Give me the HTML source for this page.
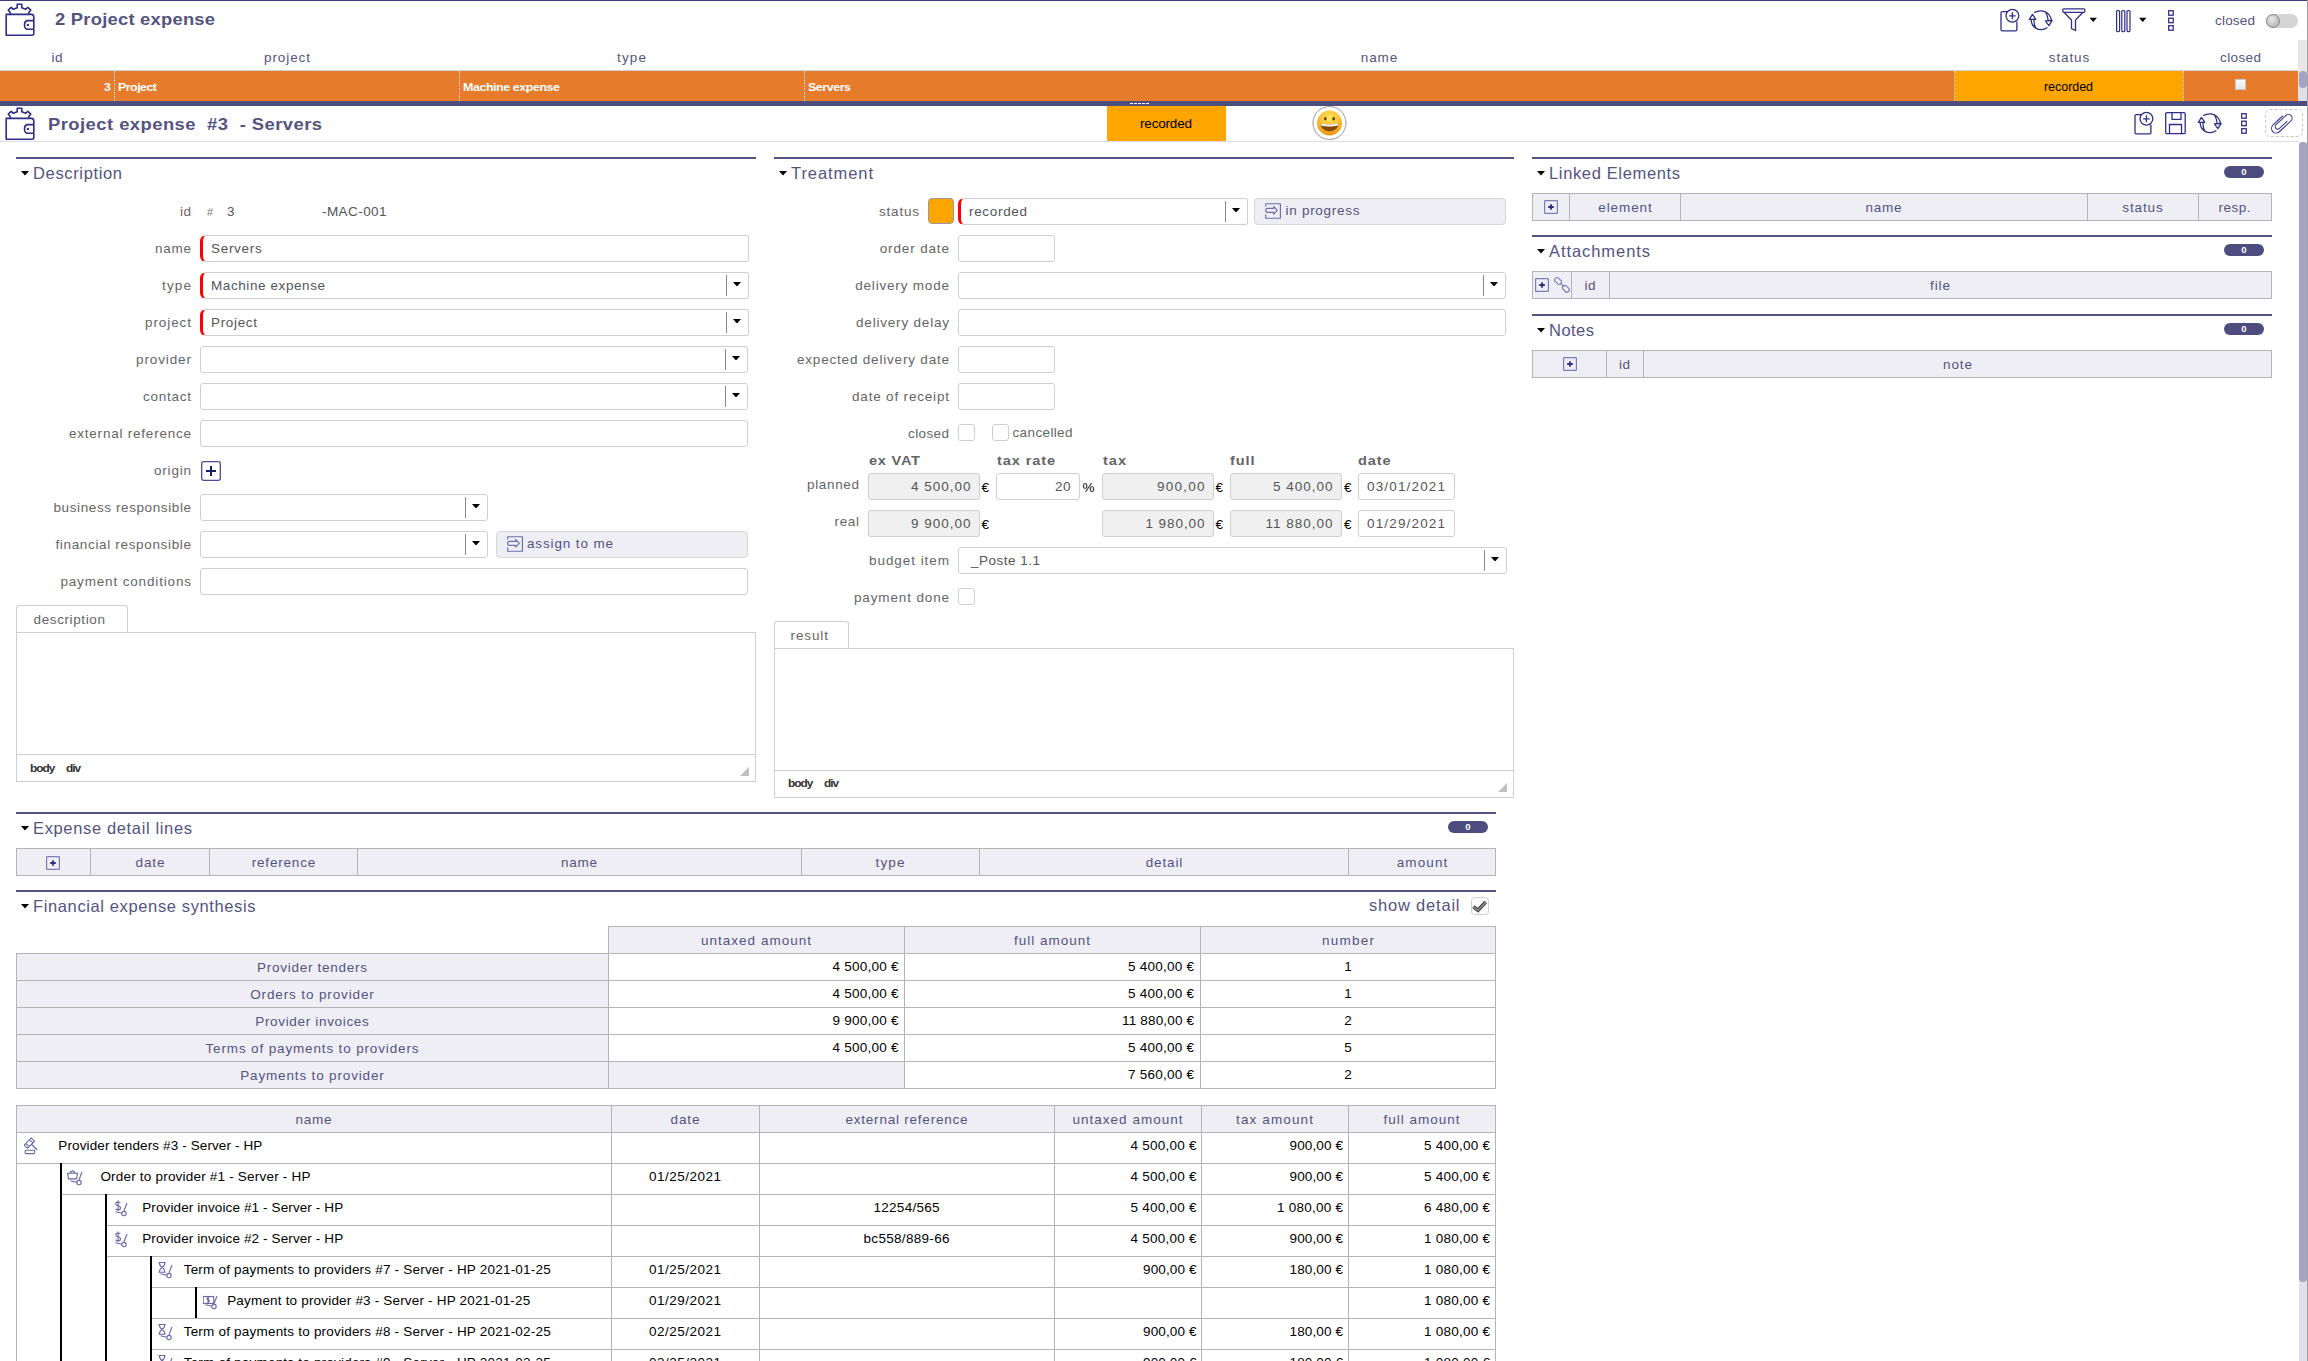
<!DOCTYPE html>
<html><head><meta charset="utf-8"><title>Project expense</title>
<style>
html,body{margin:0;padding:0;background:#fff;width:2308px;height:1361px;overflow:hidden;}
body{position:relative;font-family:"Liberation Sans",sans-serif;}
.t{position:absolute;white-space:nowrap;line-height:1;}
.r{position:absolute;box-sizing:border-box;}
</style></head><body>
<div class="r" style="left:0px;top:0px;width:2307px;height:1px;background:#3e3e72;"></div>
<div class="r" style="left:2307px;top:0px;width:1px;height:1361px;background:#a0a0a0;"></div>
<svg class="r" style="left:5px;top:3px;" width="32" height="34" viewBox="0 0 32 34"><g fill="none" stroke="#2e2e87" stroke-width="1.6" stroke-linejoin="round">
<path d="M1.2 11.4 H26.5 Q28.8 11.4 28.8 14 V30.5 Q28.8 32.2 27 32.2 H1.2 Z"/>
<path d="M28.8 17.6 H23 Q19.5 17.6 19.5 21.9 Q19.5 26.2 23 26.2 H28.8"/>
<path d="M5.2 11.2 V9.6 L3.2 7.1 L6.2 4.4 L8.4 6.3 L12.2 4.8 V1.2 H16.8 V4.8 L20.6 6.3 L22.8 4.4 L25.8 7.1 L23.8 9.6 V11.2"/>
</g><circle cx="22.9" cy="21.9" r="1.2" fill="#2e2e87"/></svg>
<div class="t" style="left:55.00px;top:10.61px;font-size:17px;letter-spacing:0.224px;color:#545381;transform:scaleX(1.0800);transform-origin:0 0;font-weight:bold;">2 Project expense</div>
<svg class="r" style="left:1995px;top:5px;" width="30" height="30" viewBox="0 0 30 30"><g fill="none" stroke="#2e2e87" stroke-width="1.3">
<path d="M12.4 6.6 H7.4 Q6 6.6 6 8 V24.4 Q6 25.8 7.4 25.8 H20.5 Q21.9 25.8 21.9 24.4 V16.6"/>
<circle cx="17.4" cy="10.8" r="6.4"/>
<path d="M17.4 7.3 V14.3 M14.1 10.8 H20.7"/></g></svg>
<svg class="r" style="left:2025px;top:5px;" width="32" height="30" viewBox="0 0 32 30"><g fill="none" stroke="#2e2e87" stroke-width="1.25" stroke-linejoin="round">
<path d="M9.2 7.6 Q15 4.6 20.8 7.1"/>
<path d="M20.6 7 Q25.6 9.6 26.4 15.6 L23.2 15.6 Q22.6 10.5 20.6 7 Z"/>
<path d="M20.4 15.8 L27.2 15.4 L23.9 20.6 Z"/>
<path d="M4.3 14.4 L7.5 9.4 L10.8 14.4 Z"/>
<path d="M6.1 14.4 Q6.3 20.5 10.8 23.2 Q8.9 19.8 8.9 14.4"/>
<path d="M10.6 23.1 Q16.5 26.6 22.4 22.6"/></g></svg>
<svg class="r" style="left:2062px;top:8px;" width="37" height="24" viewBox="0 0 37 24"><g fill="none" stroke="#2e2e87" stroke-width="1.3">
<rect x="0.8" y="0.8" width="22" height="3.5" rx="1"/>
<path d="M2 4.3 L9.5 12 V20.5 L13.5 22.5 V12 L21 4.3"/></g>
<path d="M27.5 9.8 H35 L31.25 14 Z" fill="#000"/></svg>
<svg class="r" style="left:2116px;top:10px;" width="32" height="23" viewBox="0 0 32 23"><g fill="none" stroke="#2e2e87" stroke-width="1.2">
<rect x="0.6" y="0.6" width="3" height="21" rx="1"/><rect x="5.8" y="0.6" width="3" height="21" rx="1"/><rect x="11" y="0.6" width="3" height="21" rx="1"/></g>
<path d="M23 7.8 H30.5 L26.75 12 Z" fill="#000"/></svg>
<svg class="r" style="left:2168px;top:10px;" width="7" height="22" viewBox="0 0 7 22"><g fill="none" stroke="#2e2e87" stroke-width="1.3">
<rect x="0.7" y="0.7" width="4.5" height="4.5"/><rect x="0.7" y="8.2" width="4.5" height="4.5"/><rect x="0.7" y="15.7" width="4.5" height="4.5"/></g></svg>
<div class="t" style="left:2215.00px;top:13.57px;font-size:13.5px;letter-spacing:0.196px;color:#545381;">closed</div>
<div class="r" style="left:2266px;top:14px;width:32px;height:14px;background:#d4d4d4;border-radius:7px;"></div>
<div class="r" style="left:2266px;top:14px;width:14px;height:14px;background:radial-gradient(circle at 40% 35%,#e8e8e8,#a8a8a8);border-radius:7px;box-sizing:border-box;border:1px solid #8a8a8a;"></div>
<div class="t" style="left:51.50px;top:50.57px;font-size:13.5px;letter-spacing:0.493px;color:#545381;">id</div>
<div class="t" style="left:264.00px;top:50.57px;font-size:13.5px;letter-spacing:0.914px;color:#545381;">project</div>
<div class="t" style="left:617.00px;top:50.57px;font-size:13.5px;letter-spacing:1.162px;color:#545381;">type</div>
<div class="t" style="left:1360.75px;top:50.57px;font-size:13.5px;letter-spacing:0.911px;color:#545381;">name</div>
<div class="t" style="left:2048.75px;top:50.57px;font-size:13.5px;letter-spacing:0.897px;color:#545381;">status</div>
<div class="t" style="left:2220.00px;top:50.57px;font-size:13.5px;letter-spacing:0.396px;color:#545381;">closed</div>
<div class="r" style="left:2298px;top:40px;width:9px;height:31px;background:#e8e8e8;"></div>
<div class="r" style="left:2298px;top:71px;width:9px;height:30px;background:#dfdfea;"></div>
<div class="r" style="left:2299px;top:71px;width:8px;height:17px;background:#a3a3c4;border-radius:4px;"></div>
<div class="r" style="left:0px;top:70px;width:2298px;height:1px;background:#d0d0d8;"></div>
<div class="r" style="left:0px;top:71px;width:2298px;height:30px;background:#e77b2c;"></div>
<div class="r" style="left:1955px;top:71px;width:228px;height:30px;background:#ffa500;"></div>
<div class="r" style="left:114px;top:71px;width:1px;height:30px;border-left:1px dotted rgba(255,255,255,0.9);box-sizing:border-box;"></div>
<div class="r" style="left:459px;top:71px;width:1px;height:30px;border-left:1px dotted rgba(255,255,255,0.9);box-sizing:border-box;"></div>
<div class="r" style="left:804px;top:71px;width:1px;height:30px;border-left:1px dotted rgba(255,255,255,0.9);box-sizing:border-box;"></div>
<div class="r" style="left:1954px;top:71px;width:1px;height:30px;border-left:1px dotted rgba(255,255,255,0.9);box-sizing:border-box;"></div>
<div class="r" style="left:2183px;top:71px;width:1px;height:30px;border-left:1px dotted rgba(255,255,255,0.9);box-sizing:border-box;"></div>
<div class="t" style="left:103.59px;top:82.27px;font-size:11.5px;letter-spacing:0.278px;color:#fff;transform:scaleX(1.0800);transform-origin:0 0;font-weight:bold;">3</div>
<div class="t" style="left:118.00px;top:82.27px;font-size:11.5px;letter-spacing:-0.479px;color:#fff;transform:scaleX(1.0800);transform-origin:0 0;font-weight:bold;">Project</div>
<div class="t" style="left:463.00px;top:82.27px;font-size:11.5px;letter-spacing:-0.386px;color:#fff;transform:scaleX(1.0800);transform-origin:0 0;font-weight:bold;">Machine expense</div>
<div class="t" style="left:807.50px;top:82.27px;font-size:11.5px;letter-spacing:-0.398px;color:#fff;transform:scaleX(1.0800);transform-origin:0 0;font-weight:bold;">Servers</div>
<div class="t" style="left:2044.00px;top:81.42px;font-size:12.5px;letter-spacing:-0.047px;color:#000;">recorded</div>
<div class="r" style="left:2235px;top:79px;width:11px;height:11px;background:linear-gradient(#fafafa,#e6e6e6);border:1px solid #c8c8c8;box-sizing:border-box;"></div>
<div class="r" style="left:0px;top:101px;width:2307px;height:5px;background:#4d4d7f;"></div>
<div class="r" style="left:1130px;top:102.5px;width:3px;height:1.5px;background:#fff;"></div>
<div class="r" style="left:1134px;top:102.5px;width:3px;height:1.5px;background:#fff;"></div>
<div class="r" style="left:1138px;top:102.5px;width:3px;height:1.5px;background:#fff;"></div>
<div class="r" style="left:1142px;top:102.5px;width:3px;height:1.5px;background:#fff;"></div>
<div class="r" style="left:1146px;top:102.5px;width:3px;height:1.5px;background:#fff;"></div>
<svg class="r" style="left:5px;top:107px;" width="32" height="34" viewBox="0 0 32 34"><g fill="none" stroke="#2e2e87" stroke-width="1.6" stroke-linejoin="round">
<path d="M1.2 11.4 H26.5 Q28.8 11.4 28.8 14 V30.5 Q28.8 32.2 27 32.2 H1.2 Z"/>
<path d="M28.8 17.6 H23 Q19.5 17.6 19.5 21.9 Q19.5 26.2 23 26.2 H28.8"/>
<path d="M5.2 11.2 V9.6 L3.2 7.1 L6.2 4.4 L8.4 6.3 L12.2 4.8 V1.2 H16.8 V4.8 L20.6 6.3 L22.8 4.4 L25.8 7.1 L23.8 9.6 V11.2"/>
</g><circle cx="22.9" cy="21.9" r="1.2" fill="#2e2e87"/></svg>
<div class="t" style="left:48.00px;top:115.61px;font-size:17px;letter-spacing:0.440px;color:#545381;transform:scaleX(1.0800);transform-origin:0 0;font-weight:bold;white-space:pre;">Project expense  #3  - Servers</div>
<div class="r" style="left:1107px;top:106px;width:119px;height:35px;background:#ffa500;"></div>
<div class="t" style="left:1140.00px;top:116.57px;font-size:13.5px;letter-spacing:-0.182px;color:#000;">recorded</div>
<svg class="r" style="left:1312px;top:106px;" width="36" height="35" viewBox="0 0 36 35"><defs><radialGradient id="sg" cx="50%" cy="30%" r="70%"><stop offset="0" stop-color="#ffe55c"/><stop offset="0.7" stop-color="#f8b72a"/><stop offset="1" stop-color="#e98f10"/></radialGradient></defs>
<circle cx="17.5" cy="17" r="16.5" fill="#fff" stroke="#8c8c8c" stroke-width="0.9"/>
<circle cx="17.5" cy="17" r="12.5" fill="url(#sg)"/>
<ellipse cx="13.3" cy="12.8" rx="1.3" ry="1.7" fill="#5a3a10"/><ellipse cx="21.7" cy="12.8" rx="1.3" ry="1.7" fill="#5a3a10"/>
<path d="M8.5 17.5 Q17.5 19.5 26.5 17.5 Q26 25 17.5 25.5 Q9 25 8.5 17.5 Z" fill="#8a4a0a"/>
<path d="M8.8 17.6 Q17.5 19.6 26.2 17.6 L25.8 19.5 Q17.5 21.3 9.2 19.5 Z" fill="#fff"/></svg>
<svg class="r" style="left:2128.7px;top:108px;" width="30" height="30" viewBox="0 0 30 30"><g fill="none" stroke="#2e2e87" stroke-width="1.3">
<path d="M12.4 6.6 H7.4 Q6 6.6 6 8 V24.4 Q6 25.8 7.4 25.8 H20.5 Q21.9 25.8 21.9 24.4 V16.6"/>
<circle cx="17.4" cy="10.8" r="6.4"/>
<path d="M17.4 7.3 V14.3 M14.1 10.8 H20.7"/></g></svg>
<svg class="r" style="left:2165px;top:112px;" width="22" height="23" viewBox="0 0 22 23"><g fill="none" stroke="#2e2e87" stroke-width="1.3">
<rect x="0.7" y="0.7" width="19.5" height="21" rx="1.2"/>
<path d="M7 0.7 V7.3 H16 V0.7"/><path d="M4.5 21.7 V12.5 H16.5 V21.7"/></g></svg>
<svg class="r" style="left:2193.8px;top:108px;" width="32" height="30" viewBox="0 0 32 30"><g fill="none" stroke="#2e2e87" stroke-width="1.25" stroke-linejoin="round">
<path d="M9.2 7.6 Q15 4.6 20.8 7.1"/>
<path d="M20.6 7 Q25.6 9.6 26.4 15.6 L23.2 15.6 Q22.6 10.5 20.6 7 Z"/>
<path d="M20.4 15.8 L27.2 15.4 L23.9 20.6 Z"/>
<path d="M4.3 14.4 L7.5 9.4 L10.8 14.4 Z"/>
<path d="M6.1 14.4 Q6.3 20.5 10.8 23.2 Q8.9 19.8 8.9 14.4"/>
<path d="M10.6 23.1 Q16.5 26.6 22.4 22.6"/></g></svg>
<svg class="r" style="left:2240.5px;top:113px;" width="7" height="22" viewBox="0 0 7 22"><g fill="none" stroke="#2e2e87" stroke-width="1.3">
<rect x="0.7" y="0.7" width="4.5" height="4.5"/><rect x="0.7" y="8.2" width="4.5" height="4.5"/><rect x="0.7" y="15.7" width="4.5" height="4.5"/></g></svg>
<svg class="r" style="left:2265px;top:109px;" width="39" height="28" viewBox="0 0 39 28"><rect x="0.5" y="0.5" width="37" height="27" rx="4" fill="none" stroke="#c8c8c8" stroke-dasharray="3,2"/>
<g transform="translate(17.3,14.3) rotate(-43) scale(0.93) translate(-8.5,-0.5)" fill="none" stroke="#3a3a8e" stroke-width="1.15">
<path d="M14.5 -5 H0 A5 5 0 0 0 0 5 H17 A4 4 0 0 0 17 -3 H2.5 A2.75 2.75 0 0 0 2.5 2.5 H14"/></g></svg>
<div class="r" style="left:0px;top:141px;width:2299px;height:1px;background:#dcdce6;"></div>
<div class="r" style="left:2299px;top:142px;width:8px;height:1219px;background:#dfdfea;"></div>
<div class="r" style="left:2299px;top:142px;width:8px;height:1140px;background:#a3a3c4;border-radius:4px;"></div>
<div class="r" style="left:16px;top:157px;width:740px;height:2px;background:#545381;"></div>
<svg class="r" style="left:21px;top:171px;" width="8" height="4.5" viewBox="0 0 8 4.5"><path d="M0 0 H8 L4.0 4.5 Z" fill="#000"/></svg>
<div class="t" style="left:33.00px;top:165.03px;font-size:16.5px;letter-spacing:0.647px;color:#545381;">Description</div>
<div class="t" style="left:180.00px;top:204.57px;font-size:13.5px;letter-spacing:0.493px;color:#656565;">id</div>
<div class="t" style="left:155.00px;top:241.57px;font-size:13.5px;letter-spacing:0.744px;color:#656565;">name</div>
<div class="t" style="left:162.00px;top:278.57px;font-size:13.5px;letter-spacing:1.162px;color:#656565;">type</div>
<div class="t" style="left:145.00px;top:315.57px;font-size:13.5px;letter-spacing:0.914px;color:#656565;">project</div>
<div class="t" style="left:136.00px;top:352.57px;font-size:13.5px;letter-spacing:0.890px;color:#656565;">provider</div>
<div class="t" style="left:143.00px;top:389.57px;font-size:13.5px;letter-spacing:0.746px;color:#656565;">contact</div>
<div class="t" style="left:69.00px;top:426.57px;font-size:13.5px;letter-spacing:0.776px;color:#656565;">external reference</div>
<div class="t" style="left:154.00px;top:463.57px;font-size:13.5px;letter-spacing:0.797px;color:#656565;">origin</div>
<div class="t" style="left:53.50px;top:500.57px;font-size:13.5px;letter-spacing:0.602px;color:#656565;">business responsible</div>
<div class="t" style="left:55.40px;top:537.57px;font-size:13.5px;letter-spacing:0.664px;color:#656565;">financial responsible</div>
<div class="t" style="left:60.40px;top:574.57px;font-size:13.5px;letter-spacing:0.841px;color:#656565;">payment conditions</div>
<div class="t" style="left:207.00px;top:206.69px;font-size:11px;letter-spacing:0.883px;color:#777;">#</div>
<div class="t" style="left:227.00px;top:204.57px;font-size:13.5px;letter-spacing:-0.507px;color:#555555;">3</div>
<div class="t" style="left:322.00px;top:204.57px;font-size:13.5px;letter-spacing:0.427px;color:#555555;">-MAC-001</div>
<div class="r" style="left:200px;top:235px;width:549px;height:27px;background:#fff;border:1px solid #cfcfcf;border-radius:3px;box-sizing:border-box;border-left:3px solid #ff0000;border-radius:6px 3px 3px 6px;"></div>
<div class="t" style="left:211.00px;top:241.77px;font-size:13.5px;letter-spacing:0.698px;color:#555555;">Servers</div>
<div class="r" style="left:200px;top:272px;width:549px;height:27px;background:#fff;border:1px solid #cfcfcf;border-radius:3px;box-sizing:border-box;border-left:3px solid #ff0000;border-radius:6px 3px 3px 6px;"></div>
<div class="r" style="left:726px;top:275px;width:1px;height:21px;background:#888;"></div>
<svg class="r" style="left:732.7px;top:281.7px;" width="8" height="4.6" viewBox="0 0 8 4.6"><path d="M0 0 H8 L4.0 4.6 Z" fill="#000"/></svg>
<div class="t" style="left:211.00px;top:278.77px;font-size:13.5px;letter-spacing:0.585px;color:#555555;">Machine expense</div>
<div class="r" style="left:200px;top:309px;width:549px;height:27px;background:#fff;border:1px solid #cfcfcf;border-radius:3px;box-sizing:border-box;border-left:3px solid #ff0000;border-radius:6px 3px 3px 6px;"></div>
<div class="r" style="left:726px;top:312px;width:1px;height:21px;background:#888;"></div>
<svg class="r" style="left:732.7px;top:318.7px;" width="8" height="4.6" viewBox="0 0 8 4.6"><path d="M0 0 H8 L4.0 4.6 Z" fill="#000"/></svg>
<div class="t" style="left:211.00px;top:315.77px;font-size:13.5px;letter-spacing:0.664px;color:#555555;">Project</div>
<div class="r" style="left:200px;top:346px;width:548px;height:27px;background:#fff;border:1px solid #cfcfcf;border-radius:3px;box-sizing:border-box;"></div>
<div class="r" style="left:725px;top:349px;width:1px;height:21px;background:#888;"></div>
<svg class="r" style="left:731.7px;top:355.7px;" width="8" height="4.6" viewBox="0 0 8 4.6"><path d="M0 0 H8 L4.0 4.6 Z" fill="#000"/></svg>
<div class="r" style="left:200px;top:383px;width:548px;height:27px;background:#fff;border:1px solid #cfcfcf;border-radius:3px;box-sizing:border-box;"></div>
<div class="r" style="left:725px;top:386px;width:1px;height:21px;background:#888;"></div>
<svg class="r" style="left:731.7px;top:392.7px;" width="8" height="4.6" viewBox="0 0 8 4.6"><path d="M0 0 H8 L4.0 4.6 Z" fill="#000"/></svg>
<div class="r" style="left:200px;top:420px;width:548px;height:27px;background:#fff;border:1px solid #cfcfcf;border-radius:3px;box-sizing:border-box;"></div>
<svg class="r" style="left:201px;top:461px;" width="20" height="20" viewBox="0 0 20 20"><rect x="0.7" y="0.7" width="18.6" height="18.6" rx="2" fill="#fff" stroke="#4a4a9a" stroke-width="1.3"/><path d="M10 5 V15 M5 10 H15" stroke="#1a1a6a" stroke-width="2"/></svg>
<div class="r" style="left:200px;top:494px;width:288px;height:27px;background:#fff;border:1px solid #cfcfcf;border-radius:3px;box-sizing:border-box;"></div>
<div class="r" style="left:465px;top:497px;width:1px;height:21px;background:#888;"></div>
<svg class="r" style="left:471.7px;top:503.7px;" width="8" height="4.6" viewBox="0 0 8 4.6"><path d="M0 0 H8 L4.0 4.6 Z" fill="#000"/></svg>
<div class="r" style="left:200px;top:531px;width:288px;height:27px;background:#fff;border:1px solid #cfcfcf;border-radius:3px;box-sizing:border-box;"></div>
<div class="r" style="left:465px;top:534px;width:1px;height:21px;background:#888;"></div>
<svg class="r" style="left:471.7px;top:540.7px;" width="8" height="4.6" viewBox="0 0 8 4.6"><path d="M0 0 H8 L4.0 4.6 Z" fill="#000"/></svg>
<div class="r" style="left:496px;top:531px;width:252px;height:27px;background:#efeef4;border:1px solid #d6d6d6;border-radius:4px;box-sizing:border-box;"></div>
<svg class="r" style="left:507px;top:536px;" width="17" height="17" viewBox="0 0 17 17"><g fill="none" stroke="#6c6cac" stroke-width="1.15" stroke-linejoin="round">
<path d="M0.7 3.4 V0.7 H15.4 V15.2 H0.7 V11.3"/><path d="M8.7 5.3 V3.5 L12.2 7.35 L8.7 11.2 V9.4 H2.4 Q0.7 9.4 0.7 7.35 Q0.7 5.3 2.4 5.3 Z"/></g></svg>
<div class="t" style="left:527.00px;top:536.57px;font-size:13.5px;letter-spacing:0.861px;color:#545381;">assign to me</div>
<div class="r" style="left:200px;top:568px;width:548px;height:27px;background:#fff;border:1px solid #cfcfcf;border-radius:3px;box-sizing:border-box;"></div>
<div class="r" style="left:16px;top:605px;width:112px;height:28px;background:#fff;border:1px solid #cfcfcf;border-bottom:none;border-radius:3px 3px 0 0;box-sizing:border-box;"></div>
<div class="t" style="left:33.50px;top:612.57px;font-size:13.5px;letter-spacing:0.622px;color:#656565;">description</div>
<div class="r" style="left:16px;top:632px;width:740px;height:150px;background:#fff;border:1px solid #cfcfcf;box-sizing:border-box;"></div>
<div class="r" style="left:17px;top:754px;width:738px;height:1px;background:#cfcfcf;"></div>
<div class="t" style="left:29.50px;top:763.19px;font-size:11px;letter-spacing:-0.949px;color:#333;transform:scaleX(1.0800);transform-origin:0 0;font-weight:bold;">body</div>
<div class="t" style="left:65.70px;top:763.19px;font-size:11px;letter-spacing:-1.001px;color:#333;transform:scaleX(1.0800);transform-origin:0 0;font-weight:bold;">div</div>
<svg class="r" style="left:740px;top:767px;" width="9" height="9" viewBox="0 0 9 9"><path d="M9 0 V9 H0 Z" fill="#c0c0c0"/></svg>
<div class="r" style="left:774px;top:157px;width:740px;height:2px;background:#545381;"></div>
<svg class="r" style="left:779px;top:171px;" width="8" height="4.5" viewBox="0 0 8 4.5"><path d="M0 0 H8 L4.0 4.5 Z" fill="#000"/></svg>
<div class="t" style="left:791.00px;top:165.03px;font-size:16.5px;letter-spacing:0.928px;color:#545381;">Treatment</div>
<div class="t" style="left:879.70px;top:241.57px;font-size:13.5px;letter-spacing:0.863px;color:#656565;">order date</div>
<div class="t" style="left:855.20px;top:278.57px;font-size:13.5px;letter-spacing:0.814px;color:#656565;">delivery mode</div>
<div class="t" style="left:856.00px;top:315.57px;font-size:13.5px;letter-spacing:0.805px;color:#656565;">delivery delay</div>
<div class="t" style="left:797.00px;top:352.57px;font-size:13.5px;letter-spacing:0.806px;color:#656565;">expected delivery date</div>
<div class="t" style="left:852.00px;top:389.57px;font-size:13.5px;letter-spacing:0.818px;color:#656565;">date of receipt</div>
<div class="t" style="left:908.00px;top:426.57px;font-size:13.5px;letter-spacing:0.396px;color:#656565;">closed</div>
<div class="t" style="left:869.00px;top:553.57px;font-size:13.5px;letter-spacing:0.946px;color:#656565;">budget item</div>
<div class="t" style="left:854.00px;top:590.57px;font-size:13.5px;letter-spacing:0.859px;color:#656565;">payment done</div>
<div class="t" style="left:879.00px;top:204.57px;font-size:13.5px;letter-spacing:0.797px;color:#656565;">status</div>
<div class="r" style="left:928px;top:198px;width:26px;height:26px;background:#ffa500;border:1px solid #9a9a9a;border-radius:4px;box-sizing:border-box;"></div>
<div class="r" style="left:958px;top:198px;width:290px;height:27px;background:#fff;border:1px solid #cfcfcf;border-radius:3px;box-sizing:border-box;border-left:3px solid #ff0000;border-radius:6px 3px 3px 6px;"></div>
<div class="r" style="left:1225px;top:201px;width:1px;height:21px;background:#888;"></div>
<svg class="r" style="left:1231.7px;top:207.7px;" width="8" height="4.6" viewBox="0 0 8 4.6"><path d="M0 0 H8 L4.0 4.6 Z" fill="#000"/></svg>
<div class="t" style="left:969.00px;top:204.77px;font-size:13.5px;letter-spacing:0.675px;color:#555555;">recorded</div>
<div class="r" style="left:1254px;top:198px;width:252px;height:27px;background:#efeef4;border:1px solid #d6d6d6;border-radius:4px;box-sizing:border-box;"></div>
<svg class="r" style="left:1265px;top:203px;" width="17" height="17" viewBox="0 0 17 17"><g fill="none" stroke="#6c6cac" stroke-width="1.15" stroke-linejoin="round">
<path d="M0.7 3.4 V0.7 H15.4 V15.2 H0.7 V11.3"/><path d="M8.7 5.3 V3.5 L12.2 7.35 L8.7 11.2 V9.4 H2.4 Q0.7 9.4 0.7 7.35 Q0.7 5.3 2.4 5.3 Z"/></g></svg>
<div class="t" style="left:1285.50px;top:203.57px;font-size:13.5px;letter-spacing:0.722px;color:#545381;">in progress</div>
<div class="r" style="left:958px;top:235px;width:97px;height:27px;background:#fff;border:1px solid #cfcfcf;border-radius:3px;box-sizing:border-box;"></div>
<div class="r" style="left:958px;top:272px;width:548px;height:27px;background:#fff;border:1px solid #cfcfcf;border-radius:3px;box-sizing:border-box;"></div>
<div class="r" style="left:1483px;top:275px;width:1px;height:21px;background:#888;"></div>
<svg class="r" style="left:1489.7px;top:281.7px;" width="8" height="4.6" viewBox="0 0 8 4.6"><path d="M0 0 H8 L4.0 4.6 Z" fill="#000"/></svg>
<div class="r" style="left:958px;top:309px;width:548px;height:27px;background:#fff;border:1px solid #cfcfcf;border-radius:3px;box-sizing:border-box;"></div>
<div class="r" style="left:958px;top:346px;width:97px;height:27px;background:#fff;border:1px solid #cfcfcf;border-radius:3px;box-sizing:border-box;"></div>
<div class="r" style="left:958px;top:383px;width:97px;height:27px;background:#fff;border:1px solid #cfcfcf;border-radius:3px;box-sizing:border-box;"></div>
<div class="r" style="left:958px;top:424px;width:17px;height:17px;background:#fff;border:1px solid #cfcfcf;border-radius:3px;box-sizing:border-box;"></div>
<div class="r" style="left:992px;top:424px;width:17px;height:17px;background:#fff;border:1px solid #cfcfcf;border-radius:3px;box-sizing:border-box;"></div>
<div class="t" style="left:1012.50px;top:425.77px;font-size:13.5px;letter-spacing:0.371px;color:#656565;">cancelled</div>
<div class="t" style="left:868.50px;top:453.57px;font-size:13.5px;letter-spacing:0.692px;color:#656565;transform:scaleX(1.0800);transform-origin:0 0;font-weight:bold;">ex VAT</div>
<div class="t" style="left:996.50px;top:453.57px;font-size:13.5px;letter-spacing:0.811px;color:#656565;transform:scaleX(1.0800);transform-origin:0 0;font-weight:bold;">tax rate</div>
<div class="t" style="left:1102.50px;top:453.57px;font-size:13.5px;letter-spacing:0.893px;color:#656565;transform:scaleX(1.0800);transform-origin:0 0;font-weight:bold;">tax</div>
<div class="t" style="left:1230.00px;top:453.57px;font-size:13.5px;letter-spacing:0.815px;color:#656565;transform:scaleX(1.0800);transform-origin:0 0;font-weight:bold;">full</div>
<div class="t" style="left:1358.00px;top:453.57px;font-size:13.5px;letter-spacing:0.779px;color:#656565;transform:scaleX(1.0800);transform-origin:0 0;font-weight:bold;">date</div>
<div class="t" style="left:807.00px;top:477.57px;font-size:13.5px;letter-spacing:0.659px;color:#656565;">planned</div>
<div class="t" style="left:834.50px;top:514.57px;font-size:13.5px;letter-spacing:0.664px;color:#656565;">real</div>
<div class="r" style="left:868px;top:473px;width:112px;height:27px;background:#f0f0f0;border:1px solid #cfcfcf;border-radius:3px;box-sizing:border-box;"></div>
<div class="t" style="left:911.00px;top:479.77px;font-size:13.5px;letter-spacing:0.994px;color:#555555;">4 500,00</div>
<div class="t" style="left:981.50px;top:480.57px;font-size:13.5px;letter-spacing:0.993px;color:#000;">€</div>
<div class="r" style="left:996px;top:473px;width:84px;height:27px;background:#fff;border:1px solid #cfcfcf;border-radius:3px;box-sizing:border-box;"></div>
<div class="t" style="left:1055.00px;top:479.77px;font-size:13.5px;letter-spacing:0.485px;color:#555555;">20</div>
<div class="t" style="left:1082.50px;top:480.57px;font-size:13.5px;letter-spacing:-0.004px;color:#000;">%</div>
<div class="r" style="left:1102px;top:473px;width:112px;height:27px;background:#f0f0f0;border:1px solid #cfcfcf;border-radius:3px;box-sizing:border-box;"></div>
<div class="t" style="left:1157.00px;top:479.77px;font-size:13.5px;letter-spacing:1.243px;color:#555555;">900,00</div>
<div class="t" style="left:1215.50px;top:480.57px;font-size:13.5px;letter-spacing:0.993px;color:#000;">€</div>
<div class="r" style="left:1230px;top:473px;width:112px;height:27px;background:#f0f0f0;border:1px solid #cfcfcf;border-radius:3px;box-sizing:border-box;"></div>
<div class="t" style="left:1273.00px;top:479.77px;font-size:13.5px;letter-spacing:0.994px;color:#555555;">5 400,00</div>
<div class="t" style="left:1344.00px;top:480.57px;font-size:13.5px;letter-spacing:0.993px;color:#000;">€</div>
<div class="r" style="left:1358px;top:473px;width:97px;height:27px;background:#fff;border:1px solid #cfcfcf;border-radius:3px;box-sizing:border-box;"></div>
<div class="t" style="left:1367.00px;top:479.77px;font-size:13.5px;letter-spacing:1.160px;color:#555555;">03/01/2021</div>
<div class="r" style="left:868px;top:510px;width:112px;height:27px;background:#f0f0f0;border:1px solid #cfcfcf;border-radius:3px;box-sizing:border-box;"></div>
<div class="t" style="left:911.00px;top:516.77px;font-size:13.5px;letter-spacing:0.994px;color:#555555;">9 900,00</div>
<div class="t" style="left:981.50px;top:517.57px;font-size:13.5px;letter-spacing:0.993px;color:#000;">€</div>
<div class="r" style="left:1102px;top:510px;width:112px;height:27px;background:#f0f0f0;border:1px solid #cfcfcf;border-radius:3px;box-sizing:border-box;"></div>
<div class="t" style="left:1145.50px;top:516.77px;font-size:13.5px;letter-spacing:0.922px;color:#555555;">1 980,00</div>
<div class="t" style="left:1215.50px;top:517.57px;font-size:13.5px;letter-spacing:0.993px;color:#000;">€</div>
<div class="r" style="left:1230px;top:510px;width:112px;height:27px;background:#f0f0f0;border:1px solid #cfcfcf;border-radius:3px;box-sizing:border-box;"></div>
<div class="t" style="left:1265.50px;top:516.77px;font-size:13.5px;letter-spacing:0.994px;color:#555555;">11 880,00</div>
<div class="t" style="left:1344.00px;top:517.57px;font-size:13.5px;letter-spacing:0.993px;color:#000;">€</div>
<div class="r" style="left:1358px;top:510px;width:97px;height:27px;background:#fff;border:1px solid #cfcfcf;border-radius:3px;box-sizing:border-box;"></div>
<div class="t" style="left:1367.00px;top:516.77px;font-size:13.5px;letter-spacing:1.160px;color:#555555;">01/29/2021</div>
<div class="r" style="left:958px;top:547px;width:549px;height:27px;background:#fff;border:1px solid #cfcfcf;border-radius:3px;box-sizing:border-box;"></div>
<div class="r" style="left:1484px;top:550px;width:1px;height:21px;background:#888;"></div>
<svg class="r" style="left:1490.7px;top:556.7px;" width="8" height="4.6" viewBox="0 0 8 4.6"><path d="M0 0 H8 L4.0 4.6 Z" fill="#000"/></svg>
<div class="t" style="left:971.00px;top:553.77px;font-size:13.5px;letter-spacing:0.495px;color:#555555;">_Poste 1.1</div>
<div class="r" style="left:958px;top:588px;width:17px;height:17px;background:#fff;border:1px solid #cfcfcf;border-radius:3px;box-sizing:border-box;"></div>
<div class="r" style="left:774px;top:621px;width:75px;height:28px;background:#fff;border:1px solid #cfcfcf;border-bottom:none;border-radius:3px 3px 0 0;box-sizing:border-box;"></div>
<div class="t" style="left:790.50px;top:628.57px;font-size:13.5px;letter-spacing:0.898px;color:#656565;">result</div>
<div class="r" style="left:774px;top:648px;width:740px;height:150px;background:#fff;border:1px solid #cfcfcf;box-sizing:border-box;"></div>
<div class="r" style="left:775px;top:770px;width:738px;height:1px;background:#cfcfcf;"></div>
<div class="t" style="left:787.50px;top:778.19px;font-size:11px;letter-spacing:-0.949px;color:#333;transform:scaleX(1.0800);transform-origin:0 0;font-weight:bold;">body</div>
<div class="t" style="left:823.50px;top:778.19px;font-size:11px;letter-spacing:-1.001px;color:#333;transform:scaleX(1.0800);transform-origin:0 0;font-weight:bold;">div</div>
<svg class="r" style="left:1498px;top:783px;" width="9" height="9" viewBox="0 0 9 9"><path d="M9 0 V9 H0 Z" fill="#c0c0c0"/></svg>
<div class="r" style="left:1532px;top:157px;width:740px;height:2px;background:#545381;"></div>
<svg class="r" style="left:1537px;top:171px;" width="8" height="4.5" viewBox="0 0 8 4.5"><path d="M0 0 H8 L4.0 4.5 Z" fill="#000"/></svg>
<div class="t" style="left:1549.00px;top:165.03px;font-size:16.5px;letter-spacing:0.644px;color:#545381;">Linked Elements</div>
<div class="r" style="left:2224px;top:166px;width:40px;height:12px;background:#4c4c7e;border-radius:6px;"></div>
<div class="t" style="left:2241.36px;top:167.26px;font-size:9.5px;letter-spacing:0.000px;color:#fff;font-weight:bold;">0</div>
<div class="r" style="left:1532px;top:193px;width:740px;height:28px;background:#efeef4;border:1px solid #b4b4b4;box-sizing:border-box;"></div>
<div class="r" style="left:1569px;top:193px;width:1px;height:28px;background:#b4b4b4;"></div>
<div class="r" style="left:1680px;top:193px;width:1px;height:28px;background:#b4b4b4;"></div>
<div class="r" style="left:2087px;top:193px;width:1px;height:28px;background:#b4b4b4;"></div>
<div class="r" style="left:2198px;top:193px;width:1px;height:28px;background:#b4b4b4;"></div>
<svg class="r" style="left:1544px;top:200px;" width="14" height="14" viewBox="0 0 14 14"><rect x="0.6" y="0.6" width="12.8" height="12.8" rx="0.6" fill="none" stroke="#7c7cb6" stroke-width="1.2"/>
<path d="M7.0 4.2 V9.799999999999999 M4.2 7.0 H9.799999999999999" stroke="#2e2e87" stroke-width="1.7999999999999998"/></svg>
<div class="t" style="left:1598.25px;top:200.57px;font-size:13.5px;letter-spacing:0.913px;color:#545381;">element</div>
<div class="t" style="left:1865.50px;top:200.57px;font-size:13.5px;letter-spacing:0.744px;color:#545381;">name</div>
<div class="t" style="left:2122.25px;top:200.57px;font-size:13.5px;letter-spacing:0.897px;color:#545381;">status</div>
<div class="t" style="left:2218.50px;top:200.57px;font-size:13.5px;letter-spacing:0.497px;color:#545381;">resp.</div>
<div class="r" style="left:1532px;top:235px;width:740px;height:2px;background:#545381;"></div>
<svg class="r" style="left:1537px;top:249px;" width="8" height="4.5" viewBox="0 0 8 4.5"><path d="M0 0 H8 L4.0 4.5 Z" fill="#000"/></svg>
<div class="t" style="left:1549.00px;top:243.03px;font-size:16.5px;letter-spacing:0.930px;color:#545381;">Attachments</div>
<div class="r" style="left:2224px;top:244px;width:40px;height:12px;background:#4c4c7e;border-radius:6px;"></div>
<div class="t" style="left:2241.36px;top:245.26px;font-size:9.5px;letter-spacing:0.000px;color:#fff;font-weight:bold;">0</div>
<div class="r" style="left:1532px;top:271px;width:740px;height:28px;background:#efeef4;border:1px solid #b4b4b4;box-sizing:border-box;"></div>
<div class="r" style="left:1571px;top:271px;width:1px;height:28px;background:#b4b4b4;"></div>
<div class="r" style="left:1609px;top:271px;width:1px;height:28px;background:#b4b4b4;"></div>
<svg class="r" style="left:1535px;top:278px;" width="14" height="14" viewBox="0 0 14 14"><rect x="0.6" y="0.6" width="12.8" height="12.8" rx="0.6" fill="none" stroke="#7c7cb6" stroke-width="1.2"/>
<path d="M7.0 4.2 V9.799999999999999 M4.2 7.0 H9.799999999999999" stroke="#2e2e87" stroke-width="1.7999999999999998"/></svg>
<svg class="r" style="left:1553px;top:276px;" width="18" height="18" viewBox="0 0 18 18"><g fill="none" stroke="#7a7ab4" stroke-width="1.1"><rect x="1.3" y="2.7" width="7.6" height="4.6" rx="2.3" transform="rotate(45 5.1 5)"/><rect x="9.1" y="10.5" width="7.6" height="4.6" rx="2.3" transform="rotate(45 12.9 12.8)"/><path d="M7.2 7.1 L10.8 10.7"/></g></svg>
<div class="t" style="left:1584.50px;top:278.57px;font-size:13.5px;letter-spacing:0.493px;color:#545381;">id</div>
<div class="t" style="left:1930.00px;top:278.57px;font-size:13.5px;letter-spacing:0.914px;color:#545381;">file</div>
<div class="r" style="left:1532px;top:314px;width:740px;height:2px;background:#545381;"></div>
<svg class="r" style="left:1537px;top:328px;" width="8" height="4.5" viewBox="0 0 8 4.5"><path d="M0 0 H8 L4.0 4.5 Z" fill="#000"/></svg>
<div class="t" style="left:1549.00px;top:322.03px;font-size:16.5px;letter-spacing:0.475px;color:#545381;">Notes</div>
<div class="r" style="left:2224px;top:323px;width:40px;height:12px;background:#4c4c7e;border-radius:6px;"></div>
<div class="t" style="left:2241.36px;top:324.26px;font-size:9.5px;letter-spacing:0.000px;color:#fff;font-weight:bold;">0</div>
<div class="r" style="left:1532px;top:350px;width:740px;height:28px;background:#efeef4;border:1px solid #b4b4b4;box-sizing:border-box;"></div>
<div class="r" style="left:1606px;top:350px;width:1px;height:28px;background:#b4b4b4;"></div>
<div class="r" style="left:1643px;top:350px;width:1px;height:28px;background:#b4b4b4;"></div>
<svg class="r" style="left:1563px;top:357px;" width="14" height="14" viewBox="0 0 14 14"><rect x="0.6" y="0.6" width="12.8" height="12.8" rx="0.6" fill="none" stroke="#7c7cb6" stroke-width="1.2"/>
<path d="M7.0 4.2 V9.799999999999999 M4.2 7.0 H9.799999999999999" stroke="#2e2e87" stroke-width="1.7999999999999998"/></svg>
<div class="t" style="left:1619.00px;top:357.57px;font-size:13.5px;letter-spacing:0.493px;color:#545381;">id</div>
<div class="t" style="left:1943.00px;top:357.57px;font-size:13.5px;letter-spacing:0.909px;color:#545381;">note</div>
<div class="r" style="left:16px;top:812px;width:1480px;height:2px;background:#545381;"></div>
<svg class="r" style="left:21px;top:826px;" width="8" height="4.5" viewBox="0 0 8 4.5"><path d="M0 0 H8 L4.0 4.5 Z" fill="#000"/></svg>
<div class="t" style="left:33.00px;top:820.03px;font-size:16.5px;letter-spacing:0.645px;color:#545381;">Expense detail lines</div>
<div class="r" style="left:1448px;top:821px;width:40px;height:12px;background:#4c4c7e;border-radius:6px;"></div>
<div class="t" style="left:1465.36px;top:822.26px;font-size:9.5px;letter-spacing:0.000px;color:#fff;font-weight:bold;">0</div>
<div class="r" style="left:16px;top:848px;width:1480px;height:28px;background:#efeef4;border:1px solid #b4b4b4;box-sizing:border-box;"></div>
<div class="r" style="left:90px;top:848px;width:1px;height:28px;background:#b4b4b4;"></div>
<div class="r" style="left:209px;top:848px;width:1px;height:28px;background:#b4b4b4;"></div>
<div class="r" style="left:357px;top:848px;width:1px;height:28px;background:#b4b4b4;"></div>
<div class="r" style="left:801px;top:848px;width:1px;height:28px;background:#b4b4b4;"></div>
<div class="r" style="left:979px;top:848px;width:1px;height:28px;background:#b4b4b4;"></div>
<div class="r" style="left:1348px;top:848px;width:1px;height:28px;background:#b4b4b4;"></div>
<svg class="r" style="left:46px;top:856px;" width="14" height="14" viewBox="0 0 14 14"><rect x="0.6" y="0.6" width="12.8" height="12.8" rx="0.6" fill="none" stroke="#7c7cb6" stroke-width="1.2"/>
<path d="M7.0 4.2 V9.799999999999999 M4.2 7.0 H9.799999999999999" stroke="#2e2e87" stroke-width="1.7999999999999998"/></svg>
<div class="t" style="left:135.50px;top:855.57px;font-size:13.5px;letter-spacing:0.909px;color:#545381;">date</div>
<div class="t" style="left:251.75px;top:855.57px;font-size:13.5px;letter-spacing:0.809px;color:#545381;">reference</div>
<div class="t" style="left:561.00px;top:855.57px;font-size:13.5px;letter-spacing:0.744px;color:#545381;">name</div>
<div class="t" style="left:875.50px;top:855.57px;font-size:13.5px;letter-spacing:1.162px;color:#545381;">type</div>
<div class="t" style="left:1145.75px;top:855.57px;font-size:13.5px;letter-spacing:0.846px;color:#545381;">detail</div>
<div class="t" style="left:1396.75px;top:855.57px;font-size:13.5px;letter-spacing:1.095px;color:#545381;">amount</div>
<div class="r" style="left:16px;top:890px;width:1480px;height:2px;background:#545381;"></div>
<svg class="r" style="left:21px;top:904px;" width="8" height="4.5" viewBox="0 0 8 4.5"><path d="M0 0 H8 L4.0 4.5 Z" fill="#000"/></svg>
<div class="t" style="left:33.00px;top:898.03px;font-size:16.5px;letter-spacing:0.621px;color:#545381;">Financial expense synthesis</div>
<div class="t" style="left:1369.00px;top:897.03px;font-size:16.5px;letter-spacing:0.796px;color:#545381;">show detail</div>
<div class="r" style="left:1471px;top:897px;width:17.5px;height:17.5px;background:#fff;border:1px solid #d0d0d0;border-radius:3.5px;box-sizing:border-box;"></div>
<svg class="r" style="left:1471px;top:897px;" width="18" height="18" viewBox="0 0 18 18"><path d="M2.4 9.6 L7 13.3 L14.7 5.1" fill="none" stroke="#3a3a3a" stroke-width="3.6" stroke-linejoin="miter"/><path d="M2.4 9.6 L7 13.3 L14.7 5.1" fill="none" stroke="#8a8a8a" stroke-width="1.6"/></svg>
<div class="r" style="left:608px;top:926px;width:888px;height:28px;background:#efeef4;border:1px solid #b4b4b4;box-sizing:border-box;"></div>
<div class="r" style="left:904px;top:926px;width:1px;height:28px;background:#b4b4b4;"></div>
<div class="r" style="left:1200px;top:926px;width:1px;height:28px;background:#b4b4b4;"></div>
<div class="t" style="left:701.00px;top:933.57px;font-size:13.5px;letter-spacing:1.014px;color:#545381;">untaxed amount</div>
<div class="t" style="left:1014.00px;top:933.57px;font-size:13.5px;letter-spacing:0.997px;color:#545381;">full amount</div>
<div class="t" style="left:1322.00px;top:933.57px;font-size:13.5px;letter-spacing:1.246px;color:#545381;">number</div>
<div class="r" style="left:16px;top:953px;width:1480px;height:28px;background:#fff;border:1px solid #b4b4b4;box-sizing:border-box;"></div>
<div class="r" style="left:16px;top:953px;width:593px;height:28px;background:#efeef4;border:1px solid #b4b4b4;box-sizing:border-box;"></div>
<div class="r" style="left:904px;top:953px;width:1px;height:28px;background:#b4b4b4;"></div>
<div class="r" style="left:1200px;top:953px;width:1px;height:28px;background:#b4b4b4;"></div>
<div class="t" style="left:257.00px;top:960.57px;font-size:13.5px;letter-spacing:0.731px;color:#545381;">Provider tenders</div>
<div class="t" style="left:832.50px;top:960.07px;font-size:13.5px;letter-spacing:0.244px;color:#000;">4 500,00 €</div>
<div class="t" style="left:1128.00px;top:960.07px;font-size:13.5px;letter-spacing:0.244px;color:#000;">5 400,00 €</div>
<div class="t" style="left:1344.25px;top:960.07px;font-size:13.5px;letter-spacing:-0.507px;color:#000;">1</div>
<div class="r" style="left:16px;top:980px;width:1480px;height:28px;background:#fff;border:1px solid #b4b4b4;box-sizing:border-box;"></div>
<div class="r" style="left:16px;top:980px;width:593px;height:28px;background:#efeef4;border:1px solid #b4b4b4;box-sizing:border-box;"></div>
<div class="r" style="left:904px;top:980px;width:1px;height:28px;background:#b4b4b4;"></div>
<div class="r" style="left:1200px;top:980px;width:1px;height:28px;background:#b4b4b4;"></div>
<div class="t" style="left:250.25px;top:987.57px;font-size:13.5px;letter-spacing:0.866px;color:#545381;">Orders to provider</div>
<div class="t" style="left:832.50px;top:987.07px;font-size:13.5px;letter-spacing:0.244px;color:#000;">4 500,00 €</div>
<div class="t" style="left:1128.00px;top:987.07px;font-size:13.5px;letter-spacing:0.244px;color:#000;">5 400,00 €</div>
<div class="t" style="left:1344.25px;top:987.07px;font-size:13.5px;letter-spacing:-0.507px;color:#000;">1</div>
<div class="r" style="left:16px;top:1007px;width:1480px;height:28px;background:#fff;border:1px solid #b4b4b4;box-sizing:border-box;"></div>
<div class="r" style="left:16px;top:1007px;width:593px;height:28px;background:#efeef4;border:1px solid #b4b4b4;box-sizing:border-box;"></div>
<div class="r" style="left:904px;top:1007px;width:1px;height:28px;background:#b4b4b4;"></div>
<div class="r" style="left:1200px;top:1007px;width:1px;height:28px;background:#b4b4b4;"></div>
<div class="t" style="left:255.25px;top:1014.57px;font-size:13.5px;letter-spacing:0.670px;color:#545381;">Provider invoices</div>
<div class="t" style="left:832.50px;top:1014.07px;font-size:13.5px;letter-spacing:0.244px;color:#000;">9 900,00 €</div>
<div class="t" style="left:1122.00px;top:1014.07px;font-size:13.5px;letter-spacing:0.169px;color:#000;">11 880,00 €</div>
<div class="t" style="left:1344.25px;top:1014.07px;font-size:13.5px;letter-spacing:-0.507px;color:#000;">2</div>
<div class="r" style="left:16px;top:1034px;width:1480px;height:28px;background:#fff;border:1px solid #b4b4b4;box-sizing:border-box;"></div>
<div class="r" style="left:16px;top:1034px;width:593px;height:28px;background:#efeef4;border:1px solid #b4b4b4;box-sizing:border-box;"></div>
<div class="r" style="left:904px;top:1034px;width:1px;height:28px;background:#b4b4b4;"></div>
<div class="r" style="left:1200px;top:1034px;width:1px;height:28px;background:#b4b4b4;"></div>
<div class="t" style="left:205.50px;top:1041.57px;font-size:13.5px;letter-spacing:0.851px;color:#545381;">Terms of payments to providers</div>
<div class="t" style="left:832.50px;top:1041.07px;font-size:13.5px;letter-spacing:0.244px;color:#000;">4 500,00 €</div>
<div class="t" style="left:1128.00px;top:1041.07px;font-size:13.5px;letter-spacing:0.244px;color:#000;">5 400,00 €</div>
<div class="t" style="left:1344.25px;top:1041.07px;font-size:13.5px;letter-spacing:-0.507px;color:#000;">5</div>
<div class="r" style="left:16px;top:1061px;width:1480px;height:28px;background:#fff;border:1px solid #b4b4b4;box-sizing:border-box;"></div>
<div class="r" style="left:16px;top:1061px;width:593px;height:28px;background:#efeef4;border:1px solid #b4b4b4;box-sizing:border-box;"></div>
<div class="r" style="left:608px;top:1061px;width:297px;height:28px;background:#efeef4;border:1px solid #b4b4b4;box-sizing:border-box;"></div>
<div class="r" style="left:904px;top:1061px;width:1px;height:28px;background:#b4b4b4;"></div>
<div class="r" style="left:1200px;top:1061px;width:1px;height:28px;background:#b4b4b4;"></div>
<div class="t" style="left:240.25px;top:1068.57px;font-size:13.5px;letter-spacing:0.839px;color:#545381;">Payments to provider</div>
<div class="t" style="left:1128.00px;top:1068.07px;font-size:13.5px;letter-spacing:0.244px;color:#000;">7 560,00 €</div>
<div class="t" style="left:1344.25px;top:1068.07px;font-size:13.5px;letter-spacing:-0.507px;color:#000;">2</div>
<div class="r" style="left:16px;top:1105px;width:1480px;height:28px;background:#efeef4;border:1px solid #b4b4b4;box-sizing:border-box;"></div>
<div class="r" style="left:611px;top:1105px;width:1px;height:28px;background:#b4b4b4;"></div>
<div class="r" style="left:759px;top:1105px;width:1px;height:28px;background:#b4b4b4;"></div>
<div class="r" style="left:1054px;top:1105px;width:1px;height:28px;background:#b4b4b4;"></div>
<div class="r" style="left:1201px;top:1105px;width:1px;height:28px;background:#b4b4b4;"></div>
<div class="r" style="left:1348px;top:1105px;width:1px;height:28px;background:#b4b4b4;"></div>
<div class="t" style="left:295.50px;top:1112.57px;font-size:13.5px;letter-spacing:0.744px;color:#545381;">name</div>
<div class="t" style="left:670.50px;top:1112.57px;font-size:13.5px;letter-spacing:0.909px;color:#545381;">date</div>
<div class="t" style="left:845.50px;top:1112.57px;font-size:13.5px;letter-spacing:0.776px;color:#545381;">external reference</div>
<div class="t" style="left:1072.50px;top:1112.57px;font-size:13.5px;letter-spacing:1.014px;color:#545381;">untaxed amount</div>
<div class="t" style="left:1236.00px;top:1112.57px;font-size:13.5px;letter-spacing:1.135px;color:#545381;">tax amount</div>
<div class="t" style="left:1383.50px;top:1112.57px;font-size:13.5px;letter-spacing:0.997px;color:#545381;">full amount</div>
<div class="r" style="left:16px;top:1132px;width:1px;height:229px;background:#b4b4b4;"></div>
<div class="r" style="left:1495px;top:1132px;width:1px;height:229px;background:#b4b4b4;"></div>
<div class="r" style="left:611px;top:1132px;width:1px;height:229px;background:#b4b4b4;"></div>
<div class="r" style="left:759px;top:1132px;width:1px;height:229px;background:#b4b4b4;"></div>
<div class="r" style="left:1054px;top:1132px;width:1px;height:229px;background:#b4b4b4;"></div>
<div class="r" style="left:1201px;top:1132px;width:1px;height:229px;background:#b4b4b4;"></div>
<div class="r" style="left:1348px;top:1132px;width:1px;height:229px;background:#b4b4b4;"></div>
<div class="r" style="left:16px;top:1132px;width:1479px;height:1px;background:#b4b4b4;"></div>
<svg class="r" style="left:24px;top:1132px;" width="20" height="26" viewBox="0 0 20 26"><g fill="none" stroke="#6868a8" stroke-width="1.1"><path d="M7.2 5.9 L10.7 9.2 L3.5 16.2 L0.2 13.1 Z M5.5 7.6 L9 10.9 M1.9 11.4 L5.3 14.6"/><path d="M7.6 12.5 L13.2 18"/><rect x="1.2" y="18.2" width="9.5" height="3.4" rx="0.8"/></g></svg>
<div class="t" style="left:58.30px;top:1139.07px;font-size:13.5px;letter-spacing:0.115px;color:#000;">Provider tenders #3 - Server - HP</div>
<div class="t" style="left:1130.50px;top:1139.07px;font-size:13.5px;letter-spacing:0.244px;color:#000;">4 500,00 €</div>
<div class="t" style="left:1289.50px;top:1139.07px;font-size:13.5px;letter-spacing:0.136px;color:#000;">900,00 €</div>
<div class="t" style="left:1424.00px;top:1139.07px;font-size:13.5px;letter-spacing:0.244px;color:#000;">5 400,00 €</div>
<div class="r" style="left:16px;top:1163px;width:1479px;height:1px;background:#b4b4b4;"></div>
<svg class="r" style="left:67px;top:1163px;" width="20" height="26" viewBox="0 0 20 26"><g fill="none" stroke="#6868a8" stroke-width="1.1"><path d="M0.5 10.2 H10.5 L9.5 15.9 H1.5 Z M2.6 10.2 Q5.5 6 8.4 10.2"/><path d="M15.0 9 L12.0 16.8 M3.5 17.8 L9.8 19.3"/><circle cx="12.0" cy="19.6" r="2.2"/></g></svg>
<div class="t" style="left:100.40px;top:1170.07px;font-size:13.5px;letter-spacing:0.203px;color:#000;">Order to provider #1 - Server - HP</div>
<div class="t" style="left:649.00px;top:1170.07px;font-size:13.5px;letter-spacing:0.493px;color:#000;">01/25/2021</div>
<div class="t" style="left:1130.50px;top:1170.07px;font-size:13.5px;letter-spacing:0.244px;color:#000;">4 500,00 €</div>
<div class="t" style="left:1289.50px;top:1170.07px;font-size:13.5px;letter-spacing:0.136px;color:#000;">900,00 €</div>
<div class="t" style="left:1424.00px;top:1170.07px;font-size:13.5px;letter-spacing:0.244px;color:#000;">5 400,00 €</div>
<div class="r" style="left:62px;top:1194px;width:1433px;height:1px;background:#b4b4b4;"></div>
<svg class="r" style="left:115px;top:1194px;" width="20" height="26" viewBox="0 0 20 26"><g fill="none" stroke="#6868a8" stroke-width="1.1"><path d="M5.3 8.8 Q4.5 8 3 8 Q0.8 8 0.8 9.8 Q0.8 11.5 3 11.8 Q5.5 12.2 5.5 14 Q5.5 15.8 3 15.8 Q1.2 15.8 0.6 14.8 M3.1 6.5 V17.3"/><path d="M12.0 9 L9.0 16.8 M0.5 17.8 L6.8 19.3"/><circle cx="9.0" cy="19.6" r="2.2"/></g></svg>
<div class="t" style="left:142.20px;top:1201.07px;font-size:13.5px;letter-spacing:0.115px;color:#000;">Provider invoice #1 - Server - HP</div>
<div class="t" style="left:873.50px;top:1201.07px;font-size:13.5px;letter-spacing:0.274px;color:#000;">12254/565</div>
<div class="t" style="left:1130.50px;top:1201.07px;font-size:13.5px;letter-spacing:0.244px;color:#000;">5 400,00 €</div>
<div class="t" style="left:1277.00px;top:1201.07px;font-size:13.5px;letter-spacing:0.244px;color:#000;">1 080,00 €</div>
<div class="t" style="left:1424.00px;top:1201.07px;font-size:13.5px;letter-spacing:0.244px;color:#000;">6 480,00 €</div>
<div class="r" style="left:107px;top:1225px;width:1388px;height:1px;background:#b4b4b4;"></div>
<svg class="r" style="left:115px;top:1225px;" width="20" height="26" viewBox="0 0 20 26"><g fill="none" stroke="#6868a8" stroke-width="1.1"><path d="M5.3 8.8 Q4.5 8 3 8 Q0.8 8 0.8 9.8 Q0.8 11.5 3 11.8 Q5.5 12.2 5.5 14 Q5.5 15.8 3 15.8 Q1.2 15.8 0.6 14.8 M3.1 6.5 V17.3"/><path d="M12.0 9 L9.0 16.8 M0.5 17.8 L6.8 19.3"/><circle cx="9.0" cy="19.6" r="2.2"/></g></svg>
<div class="t" style="left:142.20px;top:1232.07px;font-size:13.5px;letter-spacing:0.115px;color:#000;">Provider invoice #2 - Server - HP</div>
<div class="t" style="left:863.50px;top:1232.07px;font-size:13.5px;letter-spacing:0.313px;color:#000;">bc558/889-66</div>
<div class="t" style="left:1130.50px;top:1232.07px;font-size:13.5px;letter-spacing:0.244px;color:#000;">4 500,00 €</div>
<div class="t" style="left:1289.50px;top:1232.07px;font-size:13.5px;letter-spacing:0.136px;color:#000;">900,00 €</div>
<div class="t" style="left:1424.00px;top:1232.07px;font-size:13.5px;letter-spacing:0.244px;color:#000;">1 080,00 €</div>
<div class="r" style="left:107px;top:1256px;width:1388px;height:1px;background:#b4b4b4;"></div>
<svg class="r" style="left:158px;top:1256px;" width="20" height="26" viewBox="0 0 20 26"><g fill="none" stroke="#6868a8" stroke-width="1.1"><path d="M0.6 6.5 H7.6 M0.6 16.3 H7.6 M1.4 6.5 Q1.4 10 4.1 11.4 Q6.8 12.8 6.8 16.3 M6.8 6.5 Q6.8 10 4.1 11.4 Q1.4 12.8 1.4 16.3"/><path d="M14.0 9 L11.0 16.8 M2.5 17.8 L8.8 19.3"/><circle cx="11.0" cy="19.6" r="2.2"/></g></svg>
<div class="t" style="left:183.70px;top:1263.07px;font-size:13.5px;letter-spacing:0.207px;color:#000;">Term of payments to providers #7 - Server - HP 2021-01-25</div>
<div class="t" style="left:649.00px;top:1263.07px;font-size:13.5px;letter-spacing:0.493px;color:#000;">01/25/2021</div>
<div class="t" style="left:1143.00px;top:1263.07px;font-size:13.5px;letter-spacing:0.136px;color:#000;">900,00 €</div>
<div class="t" style="left:1289.50px;top:1263.07px;font-size:13.5px;letter-spacing:0.136px;color:#000;">180,00 €</div>
<div class="t" style="left:1424.00px;top:1263.07px;font-size:13.5px;letter-spacing:0.244px;color:#000;">1 080,00 €</div>
<div class="r" style="left:152px;top:1287px;width:1343px;height:1px;background:#b4b4b4;"></div>
<svg class="r" style="left:203px;top:1287px;" width="20" height="26" viewBox="0 0 20 26"><g fill="none" stroke="#6868a8" stroke-width="1.1"><rect x="0.2" y="9.5" width="10.5" height="7"/><path d="M6.3 11 Q5.8 10.6 5 10.6 Q4 10.6 4 11.7 Q4 12.6 5.2 12.9 Q6.4 13.2 6.4 14.1 Q6.4 15.2 5.2 15.2 Q4.3 15.2 4 14.7 M5.2 10 V16"/><path d="M14.0 9 L11.0 16.8 M2.5 17.8 L8.8 19.3"/><circle cx="11.0" cy="19.6" r="2.2"/></g></svg>
<div class="t" style="left:227.20px;top:1294.07px;font-size:13.5px;letter-spacing:0.182px;color:#000;">Payment to provider #3 - Server - HP 2021-01-25</div>
<div class="t" style="left:649.00px;top:1294.07px;font-size:13.5px;letter-spacing:0.493px;color:#000;">01/29/2021</div>
<div class="t" style="left:1424.00px;top:1294.07px;font-size:13.5px;letter-spacing:0.244px;color:#000;">1 080,00 €</div>
<div class="r" style="left:152px;top:1318px;width:1343px;height:1px;background:#b4b4b4;"></div>
<svg class="r" style="left:158px;top:1318px;" width="20" height="26" viewBox="0 0 20 26"><g fill="none" stroke="#6868a8" stroke-width="1.1"><path d="M0.6 6.5 H7.6 M0.6 16.3 H7.6 M1.4 6.5 Q1.4 10 4.1 11.4 Q6.8 12.8 6.8 16.3 M6.8 6.5 Q6.8 10 4.1 11.4 Q1.4 12.8 1.4 16.3"/><path d="M14.0 9 L11.0 16.8 M2.5 17.8 L8.8 19.3"/><circle cx="11.0" cy="19.6" r="2.2"/></g></svg>
<div class="t" style="left:183.70px;top:1325.07px;font-size:13.5px;letter-spacing:0.207px;color:#000;">Term of payments to providers #8 - Server - HP 2021-02-25</div>
<div class="t" style="left:649.00px;top:1325.07px;font-size:13.5px;letter-spacing:0.493px;color:#000;">02/25/2021</div>
<div class="t" style="left:1143.00px;top:1325.07px;font-size:13.5px;letter-spacing:0.136px;color:#000;">900,00 €</div>
<div class="t" style="left:1289.50px;top:1325.07px;font-size:13.5px;letter-spacing:0.136px;color:#000;">180,00 €</div>
<div class="t" style="left:1424.00px;top:1325.07px;font-size:13.5px;letter-spacing:0.244px;color:#000;">1 080,00 €</div>
<div class="r" style="left:152px;top:1349px;width:1343px;height:1px;background:#b4b4b4;"></div>
<svg class="r" style="left:158px;top:1349px;" width="20" height="26" viewBox="0 0 20 26"><g fill="none" stroke="#6868a8" stroke-width="1.1"><path d="M0.6 6.5 H7.6 M0.6 16.3 H7.6 M1.4 6.5 Q1.4 10 4.1 11.4 Q6.8 12.8 6.8 16.3 M6.8 6.5 Q6.8 10 4.1 11.4 Q1.4 12.8 1.4 16.3"/><path d="M14.0 9 L11.0 16.8 M2.5 17.8 L8.8 19.3"/><circle cx="11.0" cy="19.6" r="2.2"/></g></svg>
<div class="t" style="left:183.70px;top:1356.07px;font-size:13.5px;letter-spacing:0.207px;color:#000;">Term of payments to providers #9 - Server - HP 2021-03-25</div>
<div class="t" style="left:649.00px;top:1356.07px;font-size:13.5px;letter-spacing:0.493px;color:#000;">03/25/2021</div>
<div class="t" style="left:1143.00px;top:1356.07px;font-size:13.5px;letter-spacing:0.136px;color:#000;">900,00 €</div>
<div class="t" style="left:1289.50px;top:1356.07px;font-size:13.5px;letter-spacing:0.136px;color:#000;">180,00 €</div>
<div class="t" style="left:1424.00px;top:1356.07px;font-size:13.5px;letter-spacing:0.244px;color:#000;">1 080,00 €</div>
<div class="r" style="left:60px;top:1163px;width:2px;height:198px;background:#000;"></div>
<div class="r" style="left:105px;top:1194px;width:2px;height:167px;background:#000;"></div>
<div class="r" style="left:150px;top:1256px;width:2px;height:105px;background:#000;"></div>
<div class="r" style="left:195px;top:1287px;width:2px;height:31px;background:#000;"></div>
</body></html>
